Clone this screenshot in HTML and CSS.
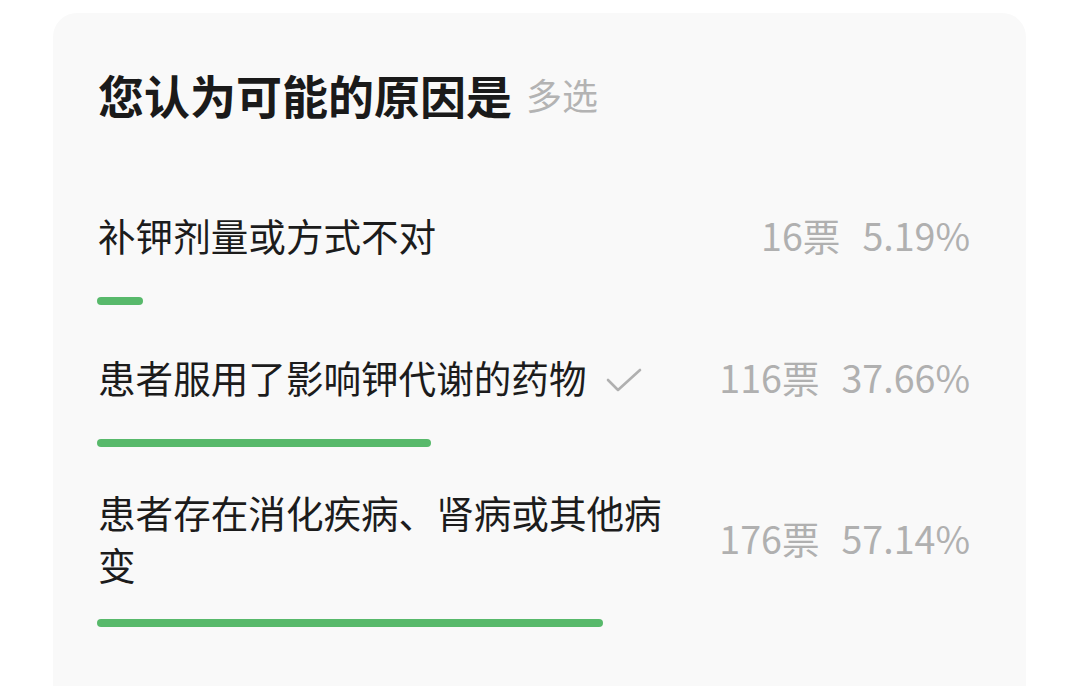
FILE: index.html
```html
<!DOCTYPE html>
<html lang="zh-CN">
<head>
  <meta charset="UTF-8">
  <title>投票结果</title>
  <link rel="stylesheet" href="styles.css">
</head>
<body>

  <div class="vote-card">
    <div class="vote-title">
      <h2>您认为可能的原因是</h2>
      <span class="vote-type">多选</span>
    </div>

    <div class="vote-list">
      <div class="vote-item">
        <div class="item-row">
          <div class="item-text">补钾剂量或方式不对</div>
          <div class="item-stats">
            <span class="count">16票</span>
            <span class="percent">5.19%</span>
          </div>
        </div>
        <div class="bar-track"><div class="bar" style="width: 5.19%;"></div></div>
      </div>

      <div class="vote-item">
        <div class="item-row">
          <div class="item-text">患者服用了影响钾代谢的药物<svg class="check" width="36" height="26" viewBox="0 0 36 26"><path d="M2 13 L12 23 L34 3" fill="none" stroke="#b0b0b0" stroke-width="2.6" stroke-linecap="round" stroke-linejoin="round"/></svg></div>
          <div class="item-stats">
            <span class="count">116票</span>
            <span class="percent">37.66%</span>
          </div>
        </div>
        <div class="bar-track"><div class="bar" style="width: 37.66%;"></div></div>
      </div>

      <div class="vote-item">
        <div class="item-row">
          <div class="item-text">患者存在消化疾病、肾病或其他病变</div>
          <div class="item-stats">
            <span class="count">176票</span>
            <span class="percent">57.14%</span>
          </div>
        </div>
        <div class="bar-track"><div class="bar" style="width: 57.14%;"></div></div>
      </div>
    </div>
  </div>

</body>
</html>
```

FILE: styles.css
```css
* {
  box-sizing: border-box;
}

body {
  margin: 0;
  background: #ffffff;
  font-family: "Noto Sans CJK SC", "Noto Sans", sans-serif;
  color: #1c1c1c;
}

.vote-card {
  margin: 13px 0 0 53px;
  width: 973px;
  min-height: 700px;
  background: #f9f9f9;
  border-radius: 24px;
  padding: 53px 43px 0 45px;
}

.vote-title {
  display: flex;
  align-items: center;
  gap: 14px;
}

.vote-title h2 {
  margin: 0;
  font-size: 46px;
  line-height: 56px;
  font-weight: 700;
  color: #1a1a1a;
}

.vote-type {
  font-size: 36px;
  line-height: 56px;
  color: #b3b3b3;
}

.vote-list {
  margin-top: 80px;
  display: flex;
  flex-direction: column;
  gap: 39px;
}

.item-row {
  display: flex;
  align-items: center;
  justify-content: space-between;
  min-height: 66px;
  padding-right: 13px;
}

.item-text {
  max-width: 590px;
  font-size: 37.6px;
  line-height: 52px;
}

.check {
  margin-left: 19px;
  vertical-align: 0;
}

.item-stats {
  display: flex;
  gap: 22px;
  font-size: 37.6px;
  line-height: 52px;
  color: #b0b0b0;
  white-space: nowrap;
}

.bar-track {
  margin-top: 29px;
  margin-left: -1px;
  width: 886px;
  height: 8px;
}

.bar {
  height: 8px;
  border-radius: 4px;
  background: #58b96b;
}
```
